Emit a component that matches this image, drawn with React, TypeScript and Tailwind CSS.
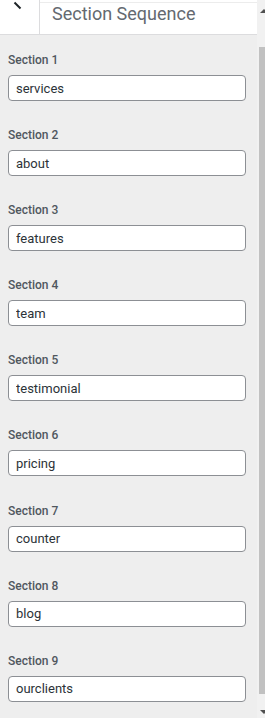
import React from "react";

const sections = [
  "services",
  "about",
  "features",
  "team",
  "testimonial",
  "pricing",
  "counter",
  "blog",
  "ourclients",
];

export default function App() {
  return (
    <div
      className="flex w-[265px] h-[718px] overflow-hidden bg-[#eeeeee]"
      style={{ fontFamily: "Roboto, 'Noto Sans', sans-serif" }}
    >
      <div className="flex w-[257px] flex-col">
        <div className="flex h-[35px] shrink-0 border-b border-[#dcdcde] bg-white">
          <div className="relative w-[40px] shrink-0 overflow-hidden border-r border-[#dcdcde]">
            <svg
              className="absolute left-0 top-0"
              width="39"
              height="34"
              viewBox="0 0 39 34"
            >
              <line
                x1="14.5"
                y1="2.5"
                x2="20.5"
                y2="8.5"
                stroke="#1d2327"
                strokeWidth="2"
              />
            </svg>
          </div>
          <div className="mt-[2px] flex-1 border-t border-[#ececec] pl-[12px] text-[18px] leading-[21px] text-[#646970]">
            Section Sequence
          </div>
        </div>
        <div className="flex flex-col gap-[26.1px] pt-[17px]">
          {sections.map((s, i) => (
            <div key={s} className="flex flex-col">
              <div className="pl-[8px] text-[12px] font-medium leading-[16px] text-[#50575e]">
                Section {i + 1}
              </div>
              <input
                readOnly
                defaultValue={s}
                className="mt-[7px] ml-[8px] h-[26px] w-[238px] rounded-[4px] border border-[#8c8f94] bg-white px-[7px] text-[13px] text-[#2c3338] outline-none"
                style={{ fontFamily: "Roboto, 'Noto Sans', sans-serif" }}
              />
            </div>
          ))}
        </div>
      </div>
      <div className="relative w-[8px] shrink-0 bg-[#f1f1f1]">
        <div className="absolute left-[2px] right-0 top-[47px] bottom-[24px] bg-[#c1c1c1]" />
        <div className="absolute left-[3px] top-[9px] h-0 w-0 border-b-[4px] border-l-[4px] border-r-[4px] border-b-[#505050] border-l-transparent border-r-transparent" />
        <div className="absolute left-[3px] bottom-[4px] h-0 w-0 border-t-[4px] border-l-[4px] border-r-[4px] border-t-[#505050] border-l-transparent border-r-transparent" />
      </div>
    </div>
  );
}
